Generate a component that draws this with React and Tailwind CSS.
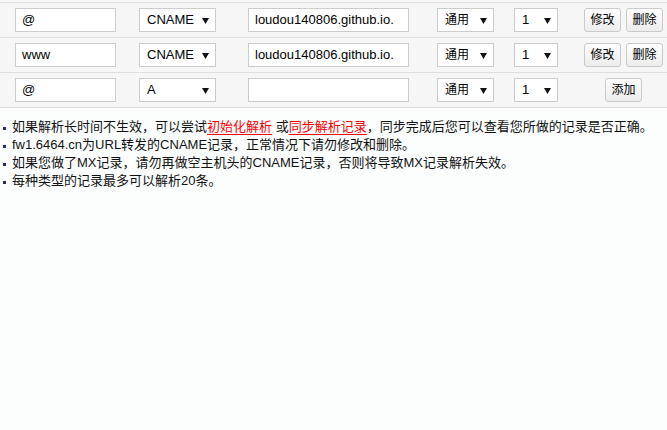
import React from "react";

const font = { fontFamily: '"Liberation Sans", Arial, "Noto Sans CJK SC", sans-serif' };

function Arrow() {
  return (
    <svg width="7" height="7" viewBox="0 0 7 7" className="shrink-0">
      <polygon points="0,1 7,1 3.5,7" fill="#111" />
    </svg>
  );
}

function Sel({ w, text, cjk }) {
  return (
    <div
      className={`flex items-center justify-between h-[24px] border border-[#cccccc] bg-white pl-[7px] pr-[6px] text-black ${cjk ? "text-[12px]" : "text-[13px]"} ${w}`}
    >
      <span>{text}</span>
      <Arrow />
    </div>
  );
}

function Btn({ children }) {
  return (
    <div className="flex items-center justify-center w-[37px] h-[24px] rounded-[3px] border border-[#cacaca] bg-gradient-to-b from-[#fefefe] to-[#ededed] text-[12px] text-black">
      {children}
    </div>
  );
}

function Row({ host, type, value, add }) {
  return (
    <div className="flex items-center h-[35px] border-b border-[#dddddd]">
      <div className="ml-[15px] w-[101px] h-[24px] border border-[#cccccc] bg-white pl-[6px] flex items-center text-[13px] text-black">
        {host}
      </div>
      <div className="ml-[23px]">
        <Sel w="w-[77px]" text={type} />
      </div>
      <div className="ml-[32px] w-[161px] h-[24px] border border-[#cccccc] bg-white pl-[6px] flex items-center text-[13px] text-black">
        {value}
      </div>
      <div className="ml-[28px]">
        <Sel w="w-[57px]" text="通用" cjk />
      </div>
      <div className="ml-[20px]">
        <Sel w="w-[44px]" text="1" />
      </div>
      <div className="ml-[26px] w-[79px] flex justify-between">
        {add ? (
          <div className="w-full flex justify-center">
            <Btn>添加</Btn>
          </div>
        ) : (
          <>
            <Btn>修改</Btn>
            <Btn>删除</Btn>
          </>
        )}
      </div>
    </div>
  );
}

function Li({ children }) {
  return (
    <div className="flex items-center h-[18px]">
      <span className="w-[3px] h-[3px] bg-[#2b2b55] ml-[3px] mr-[6px] mt-[2px]" />
      <span>{children}</span>
    </div>
  );
}

export default function App() {
  return (
    <div className="w-[667px] h-[430px] bg-[#fcfefe]" style={font}>
      <div className="bg-[#f6f6f6] pt-[2px]">
        <div className="border-t border-[#dddddd]">
          <Row host="@" type="CNAME" value="loudou140806.github.io." />
          <Row host="www" type="CNAME" value="loudou140806.github.io." />
          <Row host="@" type="A" value="" add />
        </div>
      </div>
      <div className="pt-[10px] text-[13px] text-[#111111] leading-[18px]">
        <Li>
          如果解析长时间不生效，可以尝试
          <span className="text-[#ff0000] underline underline-offset-[3px]">初始化解析</span> 或
          <span className="text-[#ff0000] underline underline-offset-[3px]">同步解析记录</span>
          ，同步完成后您可以查看您所做的记录是否正确。
        </Li>
        <Li>fw1.6464.cn为URL转发的CNAME记录，正常情况下请勿修改和删除。</Li>
        <Li>如果您做了MX记录，请勿再做空主机头的CNAME记录，否则将导致MX记录解析失效。</Li>
        <Li>每种类型的记录最多可以解析20条。</Li>
      </div>
    </div>
  );
}
